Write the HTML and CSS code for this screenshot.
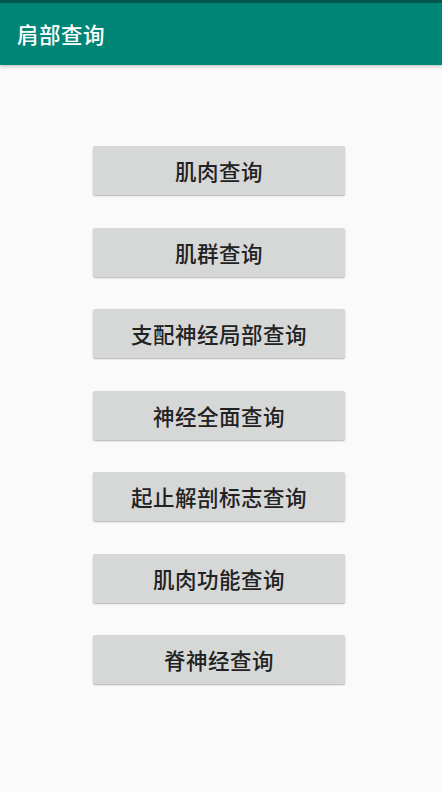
FILE: index.html
```html
<!DOCTYPE html>
<html lang="zh">
<head>
<meta charset="utf-8">
<title>肩部查询</title>
<link rel="stylesheet" href="styles.css">
</head>
<body>
<div class="statusbar"></div>
<header class="appbar"><h1 class="title">肩部查询</h1></header>
<main class="content">
  <button class="btn">肌肉查询</button>
  <button class="btn">肌群查询</button>
  <button class="btn">支配神经局部查询</button>
  <button class="btn">神经全面查询</button>
  <button class="btn">起止解剖标志查询</button>
  <button class="btn">肌肉功能查询</button>
  <button class="btn">脊神经查询</button>
</main>
</body>
</html>
```
FILE: styles.css
```css
html, body {
  margin: 0;
  padding: 0;
  background: #fafafa;
  font-family: "Noto Sans CJK SC", "Noto Sans", sans-serif;
}
body {
  width: 442px;
  height: 792px;
  overflow: hidden;
}
.statusbar {
  height: 3px;
  background: #00574b;
}
.appbar {
  height: 62px;
  background: #008577;
  display: flex;
  align-items: center;
  padding-left: 17px;
  box-shadow: 0 2px 3px rgba(0,0,0,0.18);
  position: relative;
}
.title {
  margin: 0;
  color: #fff;
  font-size: 21.5px;
  font-weight: 500;
  letter-spacing: 0.5px;
  line-height: 1;
}
.content {
  display: flex;
  flex-direction: column;
  align-items: center;
  padding-top: 81px;
  gap: 32.5px;
  padding-right: 4px;
}
.btn {
  width: 252px;
  height: 49px;
  border: none;
  border-radius: 2px;
  background: #d6d7d7;
  color: #222;
  font-family: "Noto Sans CJK SC", "Noto Sans", sans-serif;
  font-size: 21.5px;
  font-weight: 500;
  letter-spacing: 0.5px;
  padding: 0;
  box-shadow: 0 1px 2px rgba(0,0,0,0.22), 0 1px 1px rgba(0,0,0,0.08);
}
```
